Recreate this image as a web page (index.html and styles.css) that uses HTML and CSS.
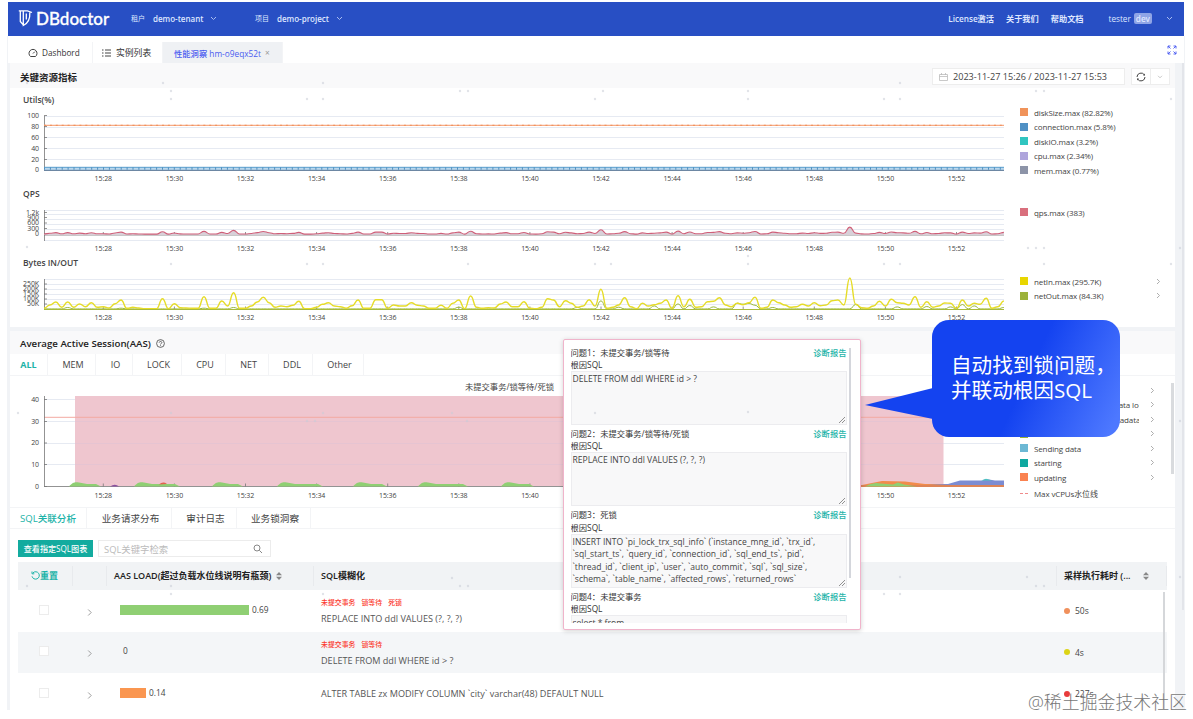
FILE: index.html
```html
<!DOCTYPE html>
<html lang="zh-CN">
<head>
    <meta charset="UTF-8">
    <meta name="viewport" content="width=device-width, initial-scale=1.0">
    <title>DBdoctor</title>
    <link rel="stylesheet" href="styles.css">
</head>
<body>
    <div class="app">
        <header class="topbar">
            <svg class="logo-icon" width="15" height="18" viewBox="0 0 15 18">
                <path d="M.8 1.800H9.500L14 3.500M2.300 2V12.500L5 15.500M5.300 2V16.500C9.500 14.500 12.300 11 11.800 3.500M8.300 4.500V10.500" fill="none" stroke="#fff" stroke-width="1.300"/>
            </svg>
            <span class="logo-text">DBdoctor</span>
            <span class="top-label tenant-label">租户</span>
            <span class="top-value tenant">demo-tenant</span>
            <svg class="chev" width="7" height="5" viewBox="0 0 7 5"><path d="M1 1l2.500 2.500L6 1"/></svg>
            <span class="top-label project-label">项目</span>
            <span class="top-value project">demo-project</span>
            <svg class="chev" width="7" height="5" viewBox="0 0 7 5"><path d="M1 1l2.500 2.500L6 1"/></svg>
            <nav class="top-links">
                <span class="license">License激活</span>
                <span>关于我们</span>
                <span>帮助文档</span>
                <span class="user">tester</span>
                <b class="badge">dev</b>
                <svg class="chev" width="7" height="5" viewBox="0 0 7 5"><path d="M1 1l2.500 2.500L6 1"/></svg>
            </nav>
        </header>

        <div class="page-tabs">
            <div class="page-tab tab-dash">
                <svg width="10" height="10" viewBox="0 0 10 10"><path d="M2.500 8.500a4 4 0 1 1 5 0zM5 5.500l1.800-1.800" fill="none" stroke="#444"/></svg>
                <span>Dashbord</span>
            </div>
            <div class="page-tab tab-list">
                <svg width="10" height="8" viewBox="0 0 10 8"><path d="M0 1h1.500M3 1h6M0 4h1.500M3 4h6M0 7h1.500M3 7h6" stroke="#444"/></svg>
                <span>实例列表</span>
            </div>
            <div class="page-tab tab-active">
                <span>性能洞察 hm-o9eqx52t</span>
                <i>×</i>
            </div>
            <svg class="expand" width="10" height="10" viewBox="0 0 10 10"><path d="M1 3.500V1h2.500M1 1l2.500 2.500M6.500 1H9v2.500M9 1L6.500 3.500M1 6.500V9h2.500M1 9l2.500-2.500M9 6.500V9H6.500M9 9L6.500 6.500"/></svg>
        </div>

        <main class="content">
            <div class="section-head">
                <h2>关键资源指标</h2>
                <div class="range">
                    <svg width="9" height="8" viewBox="0 0 9 8"><path d="M.5 1.500h8v6h-8zM.5 3.500h8M2.500 0v2M6.500 0v2" fill="none" stroke="#bbb" stroke-width=".8"/></svg>
                    <span>2023-11-27 15:26 / 2023-11-27 15:53</span>
                </div>
                <div class="refresh">
                    <svg width="10" height="10" viewBox="0 0 10 10"><path d="M1 5a4 4 0 0 1 7.300-2.200M9 5a4 4 0 0 1-7.300 2.200" fill="none" stroke="#444"/><path d="M9 1.500v2H7zM1 8.500v-2h2z" fill="#444"/></svg>
                </div>
                <div class="refresh-more">
                    <svg width="6" height="4" viewBox="0 0 7 5"><path d="M1 1l2.500 2.500L6 1" fill="none" stroke="#bbb"/></svg>
                </div>
            </div>

            <section class="panel metrics">
                <div class="metric utils">
                    <div class="metric-main">
                        <h3>Utils(%)</h3>
                        <div id="utilsChart"></div>
                    </div>
                    <ul class="legend">
                        <li><i class="c-disk"></i>diskSize.max (82.82%)</li>
                        <li><i class="c-conn"></i>connection.max (5.8%)</li>
                        <li><i class="c-io"></i>diskIO.max (3.2%)</li>
                        <li><i class="c-cpu"></i>cpu.max (2.34%)</li>
                        <li><i class="c-mem"></i>mem.max (0.77%)</li>
                    </ul>
                </div>
                <div class="metric qps">
                    <div class="metric-main">
                        <h3>QPS</h3>
                        <div id="qpsChart"></div>
                    </div>
                    <ul class="legend">
                        <li><i class="c-qps"></i>qps.max (383)</li>
                    </ul>
                </div>
                <div class="metric bytes">
                    <div class="metric-main">
                        <h3>Bytes IN/OUT</h3>
                        <div id="bytesChart"></div>
                    </div>
                    <ul class="legend">
                        <li><i class="c-in"></i>netIn.max (295.7K)<svg class="more" width="5" height="7" viewBox="0 0 5 7"><path d="M1 1l2.500 2.500L1 6"/></svg></li>
                        <li><i class="c-out"></i>netOut.max (84.3K)<svg class="more" width="5" height="7" viewBox="0 0 5 7"><path d="M1 1l2.500 2.500L1 6"/></svg></li>
                    </ul>
                </div>
            </section>

            <section class="panel aas">
                <div class="aas-head">
                    <h2>Average Active Session(AAS)</h2>
                    <svg width="9" height="9" viewBox="0 0 9 9"><circle cx="4.500" cy="4.500" r="3.900" fill="none" stroke="#444" stroke-width=".8"/><path d="M3.200 3.700c0-1.800 2.700-1.600 2.600 0 0 .9-1.300.9-1.300 1.800M4.500 6.300v.8" fill="none" stroke="#444" stroke-width=".8"/></svg>
                </div>
                <div class="aas-tabs">
                    <span class="on">ALL</span><span>MEM</span><span>IO</span><span>LOCK</span><span>CPU</span><span>NET</span><span>DDL</span><span>Other</span>
                </div>
                <div class="aas-body">
                    <div class="aas-chart">
                        <div class="mark-label">未提交事务/锁等待/死锁</div>
                        <div id="aasChart"></div>
                    </div>
                    <ul class="legend aas-legend">
                        <li><i class="c-mem"></i><span>executing</span><svg class="more" width="5" height="7" viewBox="0 0 5 7"><path d="M1 1l2.500 2.500L1 6"/></svg></li>
                        <li><i class="c-cpu"></i><span>Waiting for table metadata lock</span><svg class="more" width="5" height="7" viewBox="0 0 5 7"><path d="M1 1l2.500 2.500L1 6"/></svg></li>
                        <li><i class="c-qps"></i><span>Waiting for schema metadata lock</span><svg class="more" width="5" height="7" viewBox="0 0 5 7"><path d="M1 1l2.500 2.500L1 6"/></svg></li>
                        <li><i class="c-out"></i><span>init</span><svg class="more" width="5" height="7" viewBox="0 0 5 7"><path d="M1 1l2.500 2.500L1 6"/></svg></li>
                        <li><i class="c-send"></i><span>Sending data</span><svg class="more" width="5" height="7" viewBox="0 0 5 7"><path d="M1 1l2.500 2.500L1 6"/></svg></li>
                        <li><i class="c-start"></i><span>starting</span><svg class="more" width="5" height="7" viewBox="0 0 5 7"><path d="M1 1l2.500 2.500L1 6"/></svg></li>
                        <li><i class="c-upd"></i><span>updating</span><svg class="more" width="5" height="7" viewBox="0 0 5 7"><path d="M1 1l2.500 2.500L1 6"/></svg></li>
                        <li class="limit"><i></i><span>Max vCPUs水位线</span></li>
                    </ul>
                    <div class="legend-scroll"></div>
                </div>

                <div class="sql-tabs">
                    <span class="on">SQL关联分析</span><span>业务请求分布</span><span>审计日志</span><span>业务锁洞察</span>
                </div>
                <div class="toolbar">
                    <button>查看指定SQL图表</button>
                    <div class="search">
                        <span>SQL关键字检索</span>
                        <svg width="10" height="10" viewBox="0 0 10 10"><path d="M6.300 6.300L9 9M7 4a3 3 0 1 1-6 0 3 3 0 0 1 6 0z" fill="none" stroke="#888"/></svg>
                    </div>
                </div>

                <div class="table">
                    <div class="tr th">
                        <div class="reset">
                            <svg width="9" height="9" viewBox="0 0 9 9"><path d="M2 1.800a3.700 3.700 0 1 1-1 3.500M1 .5v2.300h2.300" fill="none" stroke="#1cb3a8"/></svg>重置
                        </div>
                        <div></div>
                        <div>AAS LOAD(超过负载水位线说明有瓶颈)<svg class="sort" width="6" height="8" viewBox="0 0 6 8"><path d="M3 0l3 3.300H0zM3 8L0 4.700h6z"/></svg></div>
                        <div>SQL模糊化</div>
                        <div>采样执行耗时 (...<svg class="sort last" width="6" height="8" viewBox="0 0 6 8"><path d="M3 0l3 3.300H0zM3 8L0 4.700h6z"/></svg></div>
                    </div>
                    <div class="tr">
                        <div><i class="check"></i></div>
                        <div><svg class="more" width="6" height="9" viewBox="0 0 5 7"><path d="M1 1l2.500 2.500L1 6"/></svg></div>
                        <div class="load"><i class="bar green"></i>0.69</div>
                        <div class="sql"><p class="tags"><b>未提交事务</b><b>锁等待</b><b>死锁</b></p><p>REPLACE INTO ddl VALUES (?, ?, ?)</p></div>
                        <div class="cost"><i class="dot orange"></i>50s</div>
                    </div>
                    <div class="tr alt">
                        <div><i class="check"></i></div>
                        <div><svg class="more" width="6" height="9" viewBox="0 0 5 7"><path d="M1 1l2.500 2.500L1 6"/></svg></div>
                        <div class="load">0</div>
                        <div class="sql"><p class="tags"><b>未提交事务</b><b>锁等待</b></p><p>DELETE FROM ddl WHERE id &gt; ?</p></div>
                        <div class="cost"><i class="dot yellow"></i>4s</div>
                    </div>
                    <div class="tr">
                        <div><i class="check"></i></div>
                        <div><svg class="more" width="6" height="9" viewBox="0 0 5 7"><path d="M1 1l2.500 2.500L1 6"/></svg></div>
                        <div class="load"><i class="bar amber"></i>0.14</div>
                        <div class="sql"><p>ALTER TABLE zx MODIFY COLUMN `city` varchar(48) DEFAULT NULL</p></div>
                        <div class="cost"><i class="dot red"></i>227s</div>
                    </div>
                    <div class="table-scroll"></div>
                </div>
            </section>
        </main>
        <div class="page-scroll"></div>
    </div>

    <!-- lock problem tooltip -->
    <div class="popup">
        <div class="issues">
            <div class="issue">
                <p><span>问题1：未提交事务/锁等待</span><a>诊断报告</a></p>
                <p>根因SQL</p>
                <div class="code">DELETE FROM ddl WHERE id &gt; ?<svg width="6" height="6" viewBox="0 0 6 6"><path d="M0 6l6-6M3 6l3-3"/></svg></div>
            </div>
            <div class="issue">
                <p><span>问题2：未提交事务/锁等待/死锁</span><a>诊断报告</a></p>
                <p>根因SQL</p>
                <div class="code">REPLACE INTO ddl VALUES (?, ?, ?)<svg width="6" height="6" viewBox="0 0 6 6"><path d="M0 6l6-6M3 6l3-3"/></svg></div>
            </div>
            <div class="issue">
                <p><span>问题3：死锁</span><a>诊断报告</a></p>
                <p>根因SQL</p>
                <div class="code">INSERT INTO `pi_lock_trx_sql_info` (`instance_mng_id`, `trx_id`,<br>`sql_start_ts`, `query_id`, `connection_id`, `sql_end_ts`, `pid`,<br>`thread_id`, `client_ip`, `user`, `auto_commit`, `sql`, `sql_size`,<br>`schema`, `table_name`, `affected_rows`, `returned_rows`<svg width="6" height="6" viewBox="0 0 6 6"><path d="M0 6l6-6M3 6l3-3"/></svg></div>
            </div>
            <div class="issue">
                <p><span>问题4：未提交事务</span><a>诊断报告</a></p>
                <p>根因SQL</p>
                <div class="code">select * from</div>
            </div>
        </div>
        <div class="popup-scroll"></div>
    </div>

    <div class="callout">
        <svg class="pointer" width="68" height="32" viewBox="0 0 68 32"><path d="M0 17L68 0v31z" fill="#1443f0"/></svg>
        <p>自动找到锁问题，</p>
        <p>并联动根因SQL</p>
    </div>

    <svg class="specks" id="specks" width="1193" height="719"></svg>
    <div class="watermark">@稀土掘金技术社区</div>

    <script>
        const STEP = 5.925;   // px per 10s sample
        const LEFT = 34;      // y axis position
        const RIGHT = 994;

        const netIn = [2,12,21,5,21,5,15,7,19,5,7,3,16,27,2,5,3,1,1,1,31,1,16,4,3,2,2,37,2,2,24,9,49,2,2,9,21,35,19,5,
            9,7,11,23,1,1,5,14,19,9,7,2,10,27,2,2,28,28,2,12,9,9,19,11,9,2,2,11,2,17,27,1,39,5,2,4,3,15,21,7,
            7,22,2,1,5,31,27,7,25,17,5,9,28,9,59,2,5,12,34,7,1,17,9,13,17,27,2,40,7,29,5,7,22,23,34,12,7,17,13,19,
            35,2,5,27,19,12,5,7,14,9,19,10,12,25,27,12,93,14,4,2,9,23,9,29,19,17,12,37,5,22,5,9,18,17,2,27,9,17,14,32,
            2,7,24];
        const netOutPeaks = {4: 5, 13: 3, 27: 3, 32: 5, 70: 6, 90: 5, 94: 25, 97: 6, 103: 10, 107: 16, 109: 11, 113: 7, 117: 18,
            118: 15, 119: 17, 120: 12, 123: 5, 137: 14, 144: 7, 149: 8, 153: 7, 155: 14, 157: 10, 162: 5};
        const netOut = netIn.map((v, i) => netOutPeaks[i] || 1);
        const qps = netIn.map(v => v * 0.23);

        function smooth(values, base) {
            const pts = values.map((v, i) => [LEFT + i * STEP, base - v / 3]);
            let d = `M${pts[0][0]} ${pts[0][1].toFixed(1)}`;
            for (let i = 1; i < pts.length; i++) {
                const mx = ((pts[i - 1][0] + pts[i][0]) / 2).toFixed(1);
                d += `C${mx} ${pts[i - 1][1].toFixed(1)} ${mx} ${pts[i][1].toFixed(1)} ${pts[i][0].toFixed(1)} ${pts[i][1].toFixed(1)}`;
            }
            return d;
        }

        function line(x1, y1, x2, y2, cls) {
            return `<line x1="${x1}" y1="${y1}" x2="${x2}" y2="${y2}" class="${cls}"/>`;
        }

        function drawChart(id, o) {
            let s = `<svg width="996" height="${o.height}">`;
            o.grid.forEach(y => s += line(LEFT, y, RIGHT, y, 'grid'));
            s += o.under || '';
            s += line(LEFT + 0.5, o.top, LEFT + 0.5, o.bottom || o.base, 'axis');
            s += line(LEFT, o.base, RIGHT, o.base, 'axis');
            o.labels.forEach(l => {
                s += line(LEFT, l[1], LEFT + 3, l[1], 'axis');
                s += `<text x="29" y="${l[1] + 2}" text-anchor="end">${l[0]}</text>`;
            });
            for (let k = 0; k < 13; k++) {
                const x = 93.3 + k * 71.1;
                s += line(x, o.base - 3, x, o.base, 'axis');
                s += `<text x="${x}" y="${o.timeY}" text-anchor="middle">15:${28 + k * 2}</text>`;
            }
            document.getElementById(id).innerHTML = s + o.series + '</svg>';
        }

        drawChart('utilsChart', {
            height: 75, top: 6, base: 60.5, timeY: 71,
            grid: [6.5, 17.5, 27.5, 38.5, 49.5],
            labels: [['100', 5.5], ['80', 16.5], ['60', 27.5], ['40', 38.5], ['20', 49.5], ['0', 60]],
            series: `<rect x="34" y="57" width="960" height="3" fill="#b9d8ee"/>
                <path d="M34 57.300H994" stroke="#5c9fcd"/>
                <path d="M34 58.500H994" stroke="#4f90c0" stroke-width="2.500" stroke-dasharray="1 4.900"/>
                <path d="M34 60.300H994" stroke="#6585a8"/>
                <path d="M34 15.400H994" stroke="#f7ab86" stroke-width="1.200"/>
                <path d="M34 15.400H994" stroke="#f0935f" stroke-width="1.400" stroke-dasharray="2 3.900"/>`
        });

        drawChart('qpsChart', {
            height: 51, top: 7, base: 32, bottom: 38, timeY: 48,
            grid: [7.5, 11.5, 16.5, 21.5, 26.5, 37.5],
            labels: [['1.2k', 9.5], ['900', 14.5], ['600', 20], ['300', 25.5], ['0', 31]],
            series: `<path d="${smooth(qps, 31.5)}L994 32H34z" fill="#d8d0d8"/><path d="${smooth(qps, 31.2)}" fill="none" stroke="#cf5f78" stroke-width="1.100"/>`
        });

        drawChart('bytesChart', {
            height: 55, top: 7, base: 37.5, timeY: 48,
            grid: [7.5, 12.5, 17.5, 22.5, 27.5, 32.5],
            labels: [['250K', 12], ['200K', 17], ['150K', 22], ['100K', 27], ['50K', 32]],
            series: `<path d="${smooth(netOut, 37.2)}" fill="none" stroke="#9ab83c"/><path d="${smooth(netIn, 37)}" fill="none" stroke="#e6dc28" stroke-width="1.400"/>
                <path d="M34 37.500H994" stroke="#a9bb3c" stroke-width="1"/>`
        });

        // short bursts of running sessions: [start, end]
        const bursts = [[59, 91], [124, 170], [202, 233], [267, 313], [343, 377], [408, 458], [491, 524]];
        let areas = '';
        bursts.forEach(b => {
            areas += `<path d="M${b[0]} 95.500C${b[0] + 4} 91 ${b[0] + 6} 91 ${b[0] + 10} 91.500L${b[0] + 18} 93H${b[1] - 5}L${b[1]} 95.500z" fill="#8fcf73"/>`;
        });
        drawChart('aasChart', {
            height: 116, top: 5, base: 95.5, timeY: 107,
            grid: [8.5, 30.5, 52.5, 73.5],
            labels: [['40', 8.5], ['30', 30.5], ['20', 52], ['10', 73.5], ['0', 95.5]],
            under: `<rect x="65" y="5" width="868.500" height="90" fill="#efc6cf"/>
                <path d="M65 30.500H933M65 52.500H933M65 73.500H933" stroke="#e3c3d2" stroke-width=".7"/>
                <path d="M34 26.300H994" stroke="#f3a9a2" stroke-width="1"/>`,
            series: areas + `<path d="M149 93.500q4-3.500 8-.5z" fill="#e2604d"/><path d="M100 95.500q5-3.500 9 0z" fill="#8a4fa0"/>
                <path d="M841 95.500L852 94 872 90 895 90.500 915 93 930 93H994V95.500z" fill="#f28c4a"/>
                <path d="M918 94L938 93 950 89.500 972 89.500 976 88 985 89.500H994V94z" fill="#7c8cd2"/>
                <path d="M971 89.500l5-1.800 6 1.800z" fill="#4cc4c0"/>
                <path d="M850 95H994" stroke="#dd8456" stroke-width="2"/>
                <path d="M855 95.500q8-5 16-3l12 1 5-2 6 2 13 2z" fill="#8fcf73"/>`
        });

        const dots = [[27,83],[163,83],[323,83],[171,91],[171,99],[307,99],[323,99],[460,91],[468,91],[603,91],[595,99],[748,91],[748,99],
            [884,99],[900,99],[900,83],[1036,91],[1044,91],[1171,99],[27,247],[171,264],[307,264],[323,264],[468,264],[595,264],[611,264],
            [748,256],[748,264],[884,264],[900,264],[1028,248],[1036,248],[1044,248],[1044,264],[1171,264],[1180,248],[18,413],[171,413],
            [307,421],[315,421],[323,413],[452,413],[467,421],[595,413],[748,412],[900,577],[1027,577],[1036,586],[1044,586],[884,594],
            [900,594],[27,586],[171,586],[171,594],[323,594],[452,578],[460,586],[468,586],[1180,421],[1180,577]];
        document.getElementById('specks').innerHTML = dots.map(d => `<circle cx="${d[0]}" cy="${d[1]}" r="1.2"/>`).join('');
    </script>
</body>
</html>
```
FILE: styles.css
```css
* {
    box-sizing: border-box;
}

body {
    margin: 0;
    background: #fff;
    font-family: 'Open Sans', 'Noto Sans CJK SC', sans-serif;
    font-size: 8px;
    color: #444;
    width: 1193px;
    height: 719px;
    overflow: hidden;
    position: relative;
}

h2, h3, p, ul {
    margin: 0;
    padding: 0;
    list-style: none;
}

i {
    font-style: normal;
}

.app {
    width: 1178px;
    height: 710px;
    margin: 0 0 0 7px;
    padding: 2px 1px 0;
    position: relative;
    overflow: hidden;
    background: linear-gradient(#fff 36px, #f1f3f6 36px);
}

/* top bar */
.topbar {
    height: 34px;
    background: #284fc4;
    color: #dfe7ff;
    display: flex;
    align-items: center;
    padding: 0 0 2px 10px;
    font-weight: 600;
    font-size: 8px;
}

.logo-icon {
    margin-right: 3px;
}

.logo-text {
    font-family: Lato, 'Open Sans', sans-serif;
    font-size: 17px;
    font-weight: 500;
    color: #fff;
    width: 73px;
    padding-top: 1px;
    -webkit-text-stroke: 0.3px #fff;
}

.top-label {
    width: 22px;
    font-size: 7px;
    font-weight: 400;
    margin-left: 22px;
}

.project-label {
    margin-left: 38px;
}

.tenant {
    width: 57px;
}

.project {
    width: 59px;
}

.chev path {
    fill: none;
    stroke: #a9bcf0;
}

.top-links {
    margin-left: auto;
    display: flex;
    align-items: center;
    gap: 12px;
    padding-right: 11px;
    font-size: 8.2px;
}

.user {
    margin-left: 13px;
    font-weight: 500;
}

.badge {
    background: #8fa5e6;
    border-radius: 2px;
    padding: 0 2px;
    line-height: 11px;
    margin: 0 2px 0 -9px;
    font-weight: 600;
}

/* page tabs */
.page-tabs {
    height: 27px;
    background: #fff;
    display: flex;
    align-items: flex-end;
    padding-left: 9px;
}

.page-tab {
    height: 21px;
    display: flex;
    align-items: center;
    font-size: 8.2px;
    color: #333;
    border-right: 1px solid #f3f4f6;
}

.tab-dash {
    width: 76px;
    padding-left: 11px;
    gap: 4px;
}

.tab-list {
    width: 70px;
    padding-left: 9px;
    gap: 4px;
    font-size: 8.8px;
}

.tab-active {
    width: 120px;
    padding-left: 11px;
    background: #eff1f4;
    color: #4a5cf0;
    gap: 4px;
    font-size: 8.3px;
    font-weight: 500;
}

.tab-active i {
    color: #999;
}

.expand {
    margin: 0 7px 8px auto;
}

.expand path {
    fill: none;
    stroke: #4456f0;
    stroke-width: 0.9;
}

/* content */
.content {
    width: 1165px;
    margin-left: 2px;
}

.section-head {
    height: 25px;
    background: #f9f9fa;
    display: flex;
    align-items: center;
    padding: 2px 5px 0 10px;
}

h2 {
    font-size: 9.5px;
    font-weight: 600;
    color: #222;
}

.range {
    margin-left: auto;
    width: 193px;
    height: 17px;
    border: 1px solid #ededed;
    background: #fff;
    display: flex;
    align-items: center;
    gap: 5px;
    padding-left: 6px;
    font-size: 9.1px;
    white-space: nowrap;
}

.refresh, .refresh-more {
    width: 20px;
    height: 17px;
    margin-left: 6px;
    border: 1px solid #ededed;
    background: #fff;
    display: flex;
    align-items: center;
    justify-content: center;
}

.refresh-more {
    margin-left: -1px;
}

.panel {
    background: #fff;
}

.metrics {
    height: 239px;
    margin-bottom: 4px;
}

.metric {
    display: flex;
}

.metric-main {
    width: 1010px;
}

.metric svg, .aas-chart svg {
    display: block;
}

h3 {
    font-size: 8.5px;
    line-height: 18px;
    height: 18px;
    font-weight: 600;
    color: #444;
    padding-left: 13px;
}

.utils h3 {
    height: 22px;
    line-height: 23px;
}

text {
    font-size: 7px;
    fill: #444;
    letter-spacing: -0.1px;
}

.grid {
    stroke: #e6eaf2;
}

.axis {
    stroke: #777;
    stroke-width: 0.8;
}

.legend {
    width: 155px;
    font-size: 8px;
    padding-top: 17px;
}

.legend li {
    display: flex;
    align-items: center;
    height: 14.5px;
    letter-spacing: -0.13px;
    white-space: nowrap;
}

.qps .legend {
    padding-top: 20px;
}

.bytes .legend {
    padding-top: 20px;
}

.legend i {
    width: 8px;
    height: 8px;
    margin-right: 6px;
    flex: none;
}

.more {
    margin-left: auto;
    margin-right: 14px;
}

.more path {
    fill: none;
    stroke: #999;
    stroke-width: 0.8;
}

.c-disk { background: #f0935a; }
.c-conn { background: #4f90c4; }
.c-io { background: #30c5c0; }
.c-cpu { background: #afa5dc; }
.c-mem { background: #8d94a8; }
.c-qps { background: #d96f7d; }
.c-in { background: #e8d600; }
.c-out { background: #9cb23a; }
.c-send { background: #6cb8d4; }
.c-start { background: #0fa8a0; }
.c-upd { background: #fa8250; }

/* average active session */
.aas-head {
    height: 23px;
    background: #f9f9fa;
    display: flex;
    align-items: center;
    padding: 2px 0 0 10px;
    gap: 5px;
}

.aas-head h2 {
    font-size: 9.7px;
}

.aas-tabs, .sql-tabs {
    display: grid;
    grid-template-columns: 38px 48px 37px 49px 44px 43px 44px 51px;
    height: 22px;
    border-bottom: 1px solid #f3f4f6;
    font-size: 9px;
}

.aas-tabs span, .sql-tabs span {
    display: flex;
    align-items: center;
    justify-content: center;
    padding-left: 3px;
    border-right: 1px solid #f3f4f6;
}

.aas-tabs .on, .sql-tabs .on {
    color: #1cb3a8;
    font-weight: 700;
    padding-left: 0;
}

.aas-body {
    height: 131px;
    display: flex;
}

.aas-chart {
    width: 1010px;
}

.mark-label {
    height: 15px;
    line-height: 21px;
    width: 544px;
    text-align: right;
    font-size: 8.3px;
}

.aas-legend {
    width: 146px;
    padding-top: 7px;
}

.aas-legend span {
    width: 105px;
    overflow: hidden;
}

.aas-legend .more {
    margin-right: 11px;
}

.aas-legend .limit {
    height: 18px;
}

.limit i {
    height: 0;
    border-top: 1px dashed #ef8a8a;
}

.legend-scroll {
    width: 3px;
    height: 91px;
    margin: 7px 0 0 5px;
    background: #d9dbde;
}

.sql-tabs {
    grid-template-columns: 77px 85px 65px 74px;
    border-top: 1px solid #f3f4f6;
    font-size: 9.6px;
    height: 22px;
}

.sql-tabs .on {
    font-weight: 500;
}

.toolbar {
    height: 33px;
    padding: 11px 0 0 8px;
    display: flex;
    gap: 5px;
}

button {
    width: 75px;
    height: 17px;
    border: 0;
    padding: 0;
    background: #13ab9f;
    color: #fff;
    font: 500 8.1px 'Open Sans', 'Noto Sans CJK SC', sans-serif;
    white-space: nowrap;
}

.search {
    width: 173px;
    height: 17px;
    border: 1px solid #ececec;
    display: flex;
    align-items: center;
    justify-content: space-between;
    padding: 0 7px 0 5px;
    color: #bbb;
    font-size: 9.4px;
}

.table {
    margin-left: 8px;
    width: 1149px;
    position: relative;
}

.tr {
    display: grid;
    grid-template-columns: 55px 34px 207px 743px 110px;
    height: 41.5px;
    align-items: center;
    font-size: 9.1px;
}

.tr.alt {
    background: #f4f6f8;
}

.th {
    height: 28px;
    background: #f1f3f5;
    font-weight: 600;
    color: #222;
    font-size: 9px;
}

.th > div {
    height: 20px;
    line-height: 20px;
    padding-left: 7px;
    border-right: 1px solid #e8eaed;
    white-space: nowrap;
}

.th .reset {
    padding-left: 13px;
    color: #1cb3a8;
}

.reset svg {
    vertical-align: -1px;
}

.sort {
    margin-left: 5px;
    vertical-align: -1px;
    fill: #888;
}

.sort.last {
    margin-left: 12px;
}

.tr .more {
    display: block;
    margin: 3px 0 0 14px;
}

.check {
    display: block;
    width: 10px;
    height: 10px;
    margin: 0 0 2px 21px;
    border: 1px solid #ececec;
    background: #fff;
}

.load {
    display: flex;
    align-items: center;
    gap: 3px;
    padding: 0 0 3px 13px;
    font-size: 8.3px;
}

.alt .load {
    padding-left: 16px;
}

.bar {
    height: 10px;
    margin-top: 1px;
}

.green {
    width: 129px;
    background: #8fcf73;
}

.amber {
    width: 26px;
    background: #fa9650;
}

.sql {
    padding: 1px 0 0 7px;
    line-height: 16px;
    color: #555;
    white-space: nowrap;
}

.tags {
    display: flex;
    gap: 6px;
    color: #fb3a2e;
    font-size: 6.9px;
}

.tags b {
    font-weight: 500;
}

.cost {
    display: flex;
    align-items: center;
    gap: 5px;
    padding-left: 7px;
    font-size: 8.5px;
}

.dot {
    width: 6px;
    height: 6px;
    border-radius: 50%;
}

.orange { background: #f0905c; }
.yellow { background: #dcd416; }
.red { background: #e83c3c; }

.table-scroll {
    position: absolute;
    right: 2px;
    top: 30px;
    width: 2px;
    height: 120px;
    background: #d5d7da;
}

.page-scroll {
    position: absolute;
    right: 1px;
    top: 63px;
    width: 2px;
    height: 547px;
    background: #e3e5ea;
}

/* popup with detected problems */
.popup {
    position: absolute;
    left: 562.5px;
    top: 338.5px;
    width: 298px;
    height: 291px;
    padding: 7px;
    background: #fff;
    border: 1.5px solid #f0b4cb;
    border-radius: 2px;
    box-shadow: 0 1px 5px rgba(0, 0, 0, 0.18);
    display: flex;
    font-size: 8.55px;
}

.issues {
    width: 276px;
    height: 276px;
    overflow: hidden;
}

.issue {
    height: 81.4px;
}

.issue p {
    display: flex;
    justify-content: space-between;
    line-height: 12.3px;
    height: 12.3px;
    font-size: 8.3px;
    color: #333;
}

.issue a {
    color: #1cb3a8;
    font-weight: 500;
}

.code {
    height: 54px;
    border: 1px solid #ececef;
    background: #f8f8f9;
    line-height: 12.4px;
    padding: 1px 2px 0 1px;
    position: relative;
    white-space: nowrap;
    overflow: hidden;
}

.code svg {
    position: absolute;
    right: 1px;
    bottom: 1px;
    fill: none;
    stroke: #777;
    stroke-width: 0.8;
}

.popup-scroll {
    width: 2.5px;
    height: 230px;
    margin: 1px 0 0 2px;
    background: #d4d6dc;
}

/* callout */
.callout {
    position: absolute;
    left: 932px;
    top: 320px;
    width: 188px;
    height: 117px;
    border-radius: 17px;
    background: linear-gradient(115deg, #1443f0 50%, #4d78ff 95%);
    color: #fff;
    padding: 33px 0 0 19px;
    font-size: 20.6px;
    line-height: 25px;
    white-space: nowrap;
}

.pointer {
    position: absolute;
    left: -67px;
    top: 68px;
}

.specks {
    position: absolute;
    left: 0;
    top: 0;
    fill: #c9ccd6;
    fill-opacity: 0.55;
}

.watermark {
    position: absolute;
    right: 6px;
    top: 690px;
    font-size: 17.9px;
    line-height: 25px;
    font-weight: 300;
    color: #777;
    white-space: nowrap;
    text-shadow: 0 0 1px #fff;
}
```
